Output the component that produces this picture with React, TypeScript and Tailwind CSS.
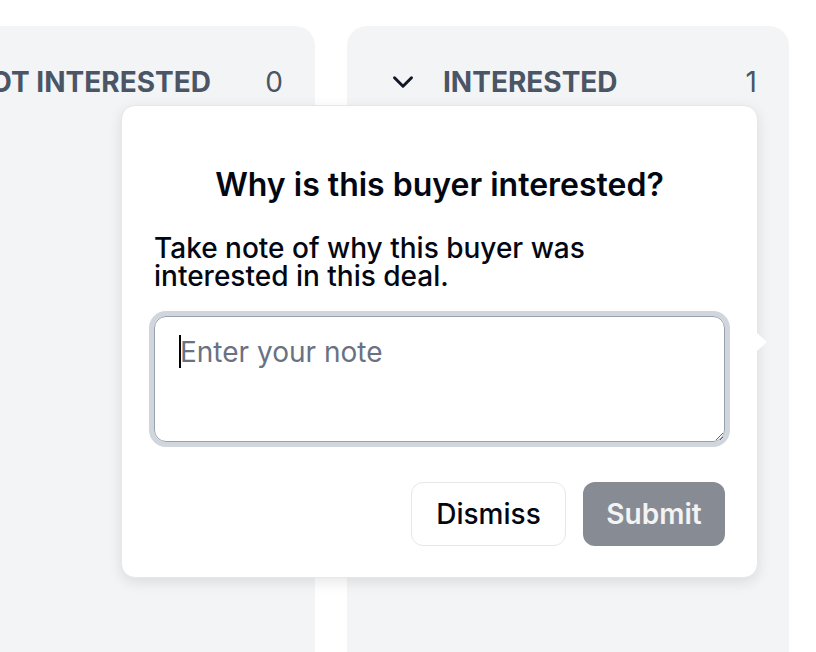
import { ChevronDown } from "lucide-react"

function Column({ title, count }: { title: string; count: number }) {
  return (
    <div className="w-[442px] shrink-0 h-[700px] bg-gray-100 rounded-[20px]">
      <div className="flex items-center h-[56px] mt-[28px] pl-[39px] pr-8">
        <ChevronDown className="w-[34px] h-[34px] text-gray-900" strokeWidth={2.1} />
        <span className="ml-[23px] text-[28px] font-bold text-gray-600">
          {title}
        </span>
        <span className="ml-auto text-[28px] text-gray-600">{count}</span>
      </div>
    </div>
  )
}

export default function App() {
  return (
    <div
      className="relative w-[816px] h-[652px] overflow-hidden bg-white"
      style={{ fontFamily: "Inter, 'Noto Sans', sans-serif" }}
    >
      {/* columns */}
      <div className="flex gap-8 pt-[26px] ml-[-127px]">
        <Column title="NOT INTERESTED" count={0} />
        <Column title="INTERESTED" count={1} />
      </div>

      {/* popover */}
      <div className="absolute left-[121px] top-[105px] w-[637px] h-[473px] bg-white rounded-[14px] border border-gray-200 shadow-[0_4px_14px_rgba(0,0,0,0.10)] px-[32px] pt-[59px]">
        <h2 className="text-center text-[32px] leading-[40px] font-semibold text-gray-950">
          Why is this buyer interested?
        </h2>
        <p className="mt-[29px] text-[28px] leading-[28px] font-medium text-gray-950">
          Take note of why this buyer was
          <br />
          interested in this deal.
        </p>
        <div className="relative mt-[26px]">
          <textarea
            autoFocus
            placeholder="Enter your note"
            className="block w-full h-[126px] rounded-[12px] border border-gray-400 ring-[5px] ring-gray-300 outline-none px-[25px] py-[17px] text-[28px] leading-[36px] text-gray-900 placeholder:text-gray-500"
          />
          {/* caret */}
          <span className="absolute left-[25px] top-[19px] w-[2px] h-[33px] bg-black" />
        </div>
        <div className="flex justify-end gap-[17px] mt-[40px]">
          <button className="h-[64px] w-[155px] rounded-[12px] border border-gray-200 bg-white text-[28px] font-medium text-gray-950">
            Dismiss
          </button>
          <button className="h-[64px] w-[142px] rounded-[12px] bg-gray-900/50 text-[28px] font-semibold text-white/90">
            Submit
          </button>
        </div>

        {/* arrow */}
        <div className="absolute right-[-10px] top-[227px] w-0 h-0 border-y-[9px] border-y-transparent border-l-[10px] border-l-white" />
      </div>
    </div>
  )
}
